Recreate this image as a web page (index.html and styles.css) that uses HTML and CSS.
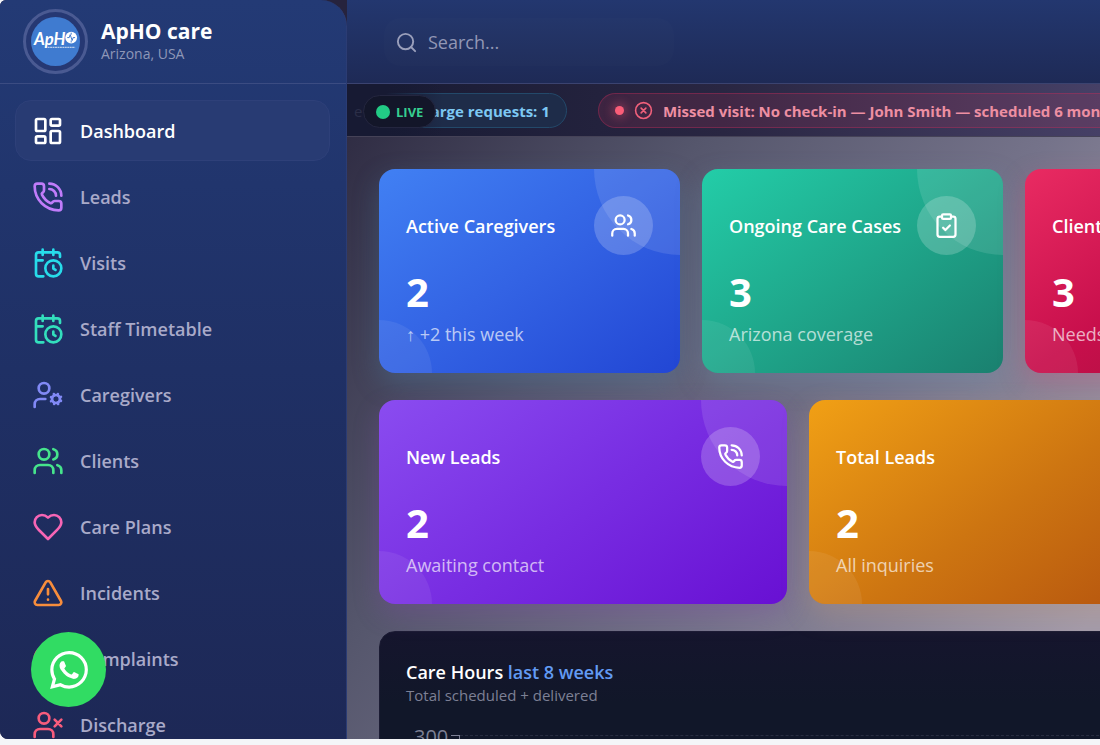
FILE: index.html
```html
<!DOCTYPE html>
<html lang="en">
<head>
    <meta charset="UTF-8">
    <meta name="viewport" content="width=device-width, initial-scale=1.0">
    <title>ApHO care</title>
    <link rel="stylesheet" href="styles.css">
</head>
<body>
    <svg class="sprite" aria-hidden="true">
        <symbol id="dashboard" viewBox="0 0 24 24"><rect x="3" y="3" width="7" height="9" rx="1"/><rect x="14" y="3" width="7" height="5" rx="1"/><rect x="14" y="12" width="7" height="9" rx="1"/><rect x="3" y="16" width="7" height="5" rx="1"/></symbol>
        <symbol id="phone" viewBox="0 0 24 24"><path d="M13 2a9 9 0 0 1 9 9M13 6a5 5 0 0 1 5 5M13.832 16.568a1 1 0 0 0 1.213-.303l.355-.465A2 2 0 0 1 17 15h3a2 2 0 0 1 2 2v3a2 2 0 0 1-2 2A18 18 0 0 1 2 4a2 2 0 0 1 2-2h3a2 2 0 0 1 2 2v3a2 2 0 0 1-.8 1.6l-.468.351a1 1 0 0 0-.292 1.233 14 14 0 0 0 6.392 6.384"/></symbol>
        <symbol id="calendar" viewBox="0 0 24 24"><path d="M16 14v2.2l1.6 1M16 2v4M21 7.5V6a2 2 0 0 0-2-2H5a2 2 0 0 0-2 2v14a2 2 0 0 0 2 2h3.5M3 10h5M8 2v4"/><circle cx="16" cy="16" r="6"/></symbol>
        <symbol id="user-cog" viewBox="0 0 24 24"><circle cx="18" cy="15" r="3"/><circle cx="9" cy="7" r="4"/><path d="M10 15H6a4 4 0 0 0-4 4v2M21.7 16.4l-.9-.3M15.2 13.9l-.9-.3M16.6 18.7l.3-.9M19.1 12.2l.3-.9M19.6 18.7l-.4-1M16.8 12.3l-.4-1M14.3 16.6l1-.4M20.7 13.8l1-.4"/></symbol>
        <symbol id="users" viewBox="0 0 24 24"><path d="M16 21v-2a4 4 0 0 0-4-4H6a4 4 0 0 0-4 4v2M16 3.128a4 4 0 0 1 0 7.744M22 21v-2a4 4 0 0 0-3-3.87"/><circle cx="9" cy="7" r="4"/></symbol>
        <symbol id="heart" viewBox="0 0 24 24"><path d="M19 14c1.49-1.46 3-3.21 3-5.5A5.5 5.5 0 0 0 16.5 3c-1.76 0-3 .5-4.5 2-1.5-1.5-2.74-2-4.5-2A5.5 5.5 0 0 0 2 8.5c0 2.3 1.5 4.05 3 5.5l7 7Z"/></symbol>
        <symbol id="alert" viewBox="0 0 24 24"><path d="m21.73 18-8-14a2 2 0 0 0-3.48 0l-8 14A2 2 0 0 0 4 21h16a2 2 0 0 0 1.73-3M12 9v4M12 17h.01"/></symbol>
        <symbol id="circle-alert" viewBox="0 0 24 24"><circle cx="12" cy="12" r="10"/><path d="M12 8v4M12 16h.01"/></symbol>
        <symbol id="user-x" viewBox="0 0 24 24"><path d="M16 21v-2a4 4 0 0 0-4-4H6a4 4 0 0 0-4 4v2M17 8l5 5M22 8l-5 5"/><circle cx="9" cy="7" r="4"/></symbol>
        <symbol id="search" viewBox="0 0 24 24"><circle cx="11" cy="11" r="8"/><path d="m21 21-4.3-4.3"/></symbol>
        <symbol id="circle-x" viewBox="0 0 24 24"><circle cx="12" cy="12" r="10"/><path d="m15 9-6 6M9 9l6 6"/></symbol>
        <symbol id="clipboard" viewBox="0 0 24 24"><rect x="8" y="2" width="8" height="4" rx="1"/><path d="M16 4h2a2 2 0 0 1 2 2v14a2 2 0 0 1-2 2H6a2 2 0 0 1-2-2V6a2 2 0 0 1 2-2h2M9 14l2 2 4-4"/></symbol>
    </svg>

    <div class="app">
        <aside class="sidebar">
            <div class="brand">
                <div class="brand-ring">
                    <svg class="brand-logo" viewBox="0 0 50 50" role="img" aria-label="ApHO logo">
                        <circle cx="25" cy="25" r="25" fill="#3f7bd0"/>
                        <text x="3" y="29" class="logo-text">ApH</text>
                        <circle cx="41" cy="21" r="6" fill="#fff"/>
                        <path d="M37 21h2l1-3 2 6 1-3h2M41 16v2M41 24v2" fill="none" stroke="#3f7bd0" stroke-width="1"/>
                        <path d="M17 31h28" stroke="#b9cdea" stroke-width="1.5" stroke-dasharray="2 .5"/>
                    </svg>
                </div>
                <div>
                    <div class="brand-name">ApHO care</div>
                    <div class="brand-place">Arizona, USA</div>
                </div>
            </div>
            <nav class="menu">
                <a href="#" class="menu-item active"><svg class="icon"><use href="#dashboard"/></svg>Dashboard</a>
                <a href="#" class="menu-item"><svg class="icon purple"><use href="#phone"/></svg>Leads</a>
                <a href="#" class="menu-item"><svg class="icon cyan"><use href="#calendar"/></svg>Visits</a>
                <a href="#" class="menu-item"><svg class="icon teal"><use href="#calendar"/></svg>Staff Timetable</a>
                <a href="#" class="menu-item"><svg class="icon indigo"><use href="#user-cog"/></svg>Caregivers</a>
                <a href="#" class="menu-item"><svg class="icon green"><use href="#users"/></svg>Clients</a>
                <a href="#" class="menu-item"><svg class="icon pink"><use href="#heart"/></svg>Care Plans</a>
                <a href="#" class="menu-item"><svg class="icon orange"><use href="#alert"/></svg>Incidents</a>
                <a href="#" class="menu-item"><svg class="icon red"><use href="#circle-alert"/></svg>Complaints</a>
                <a href="#" class="menu-item"><svg class="icon rose"><use href="#user-x"/></svg>Discharge</a>
            </nav>
        </aside>

        <div class="content">
            <header class="topbar">
                <label class="search">
                    <svg class="icon"><use href="#search"/></svg>
                    <input type="search" placeholder="Search..." aria-label="Search">
                </label>
            </header>

            <div class="ticker">
                <div class="ticker-track">
                    <div class="alert-pill info"><span class="dot"></span><svg class="icon"><use href="#user-x"/></svg>Discharge requests: 1</div>
                    <div class="alert-pill danger"><span class="dot"></span><svg class="icon"><use href="#circle-x"/></svg>Missed visit: No check-in — John Smith — scheduled 6 months ago</div>
                </div>
                <span class="ticker-fade">e</span>
                <div class="live"><span class="live-dot"></span>LIVE</div>
            </div>

            <main class="main">
                <div class="stats four">
                    <section class="stat blue">
                        <div class="stat-head"><h3>Active Caregivers</h3><span class="stat-icon"><svg class="icon"><use href="#users"/></svg></span></div>
                        <p class="stat-value">2</p>
                        <p class="stat-note">↑ +2 this week</p>
                    </section>
                    <section class="stat emerald">
                        <div class="stat-head"><h3>Ongoing Care Cases</h3><span class="stat-icon"><svg class="icon"><use href="#clipboard"/></svg></span></div>
                        <p class="stat-value">3</p>
                        <p class="stat-note">Arizona coverage</p>
                    </section>
                    <section class="stat crimson">
                        <div class="stat-head"><h3>Client Incidents</h3><span class="stat-icon"><svg class="icon"><use href="#alert"/></svg></span></div>
                        <p class="stat-value">3</p>
                        <p class="stat-note">Needs review</p>
                    </section>
                </div>
                <div class="stats three">
                    <section class="stat violet">
                        <div class="stat-head"><h3>New Leads</h3><span class="stat-icon"><svg class="icon"><use href="#phone"/></svg></span></div>
                        <p class="stat-value">2</p>
                        <p class="stat-note">Awaiting contact</p>
                    </section>
                    <section class="stat amber">
                        <div class="stat-head"><h3>Total Leads</h3><span class="stat-icon"><svg class="icon"><use href="#users"/></svg></span></div>
                        <p class="stat-value">2</p>
                        <p class="stat-note">All inquiries</p>
                    </section>
                </div>
                <section class="chart">
                    <h3>Care Hours <span>last 8 weeks</span></h3>
                    <p>Total scheduled + delivered</p>
                    <div class="axis"><span>300</span><i class="tick"></i><i class="grid-line"></i></div>
                </section>
            </main>
        </div>
    </div>

    <a href="#" class="whatsapp" aria-label="WhatsApp">
        <svg viewBox="0 0 24 24"><path d="M17.472 14.382c-.297-.149-1.758-.867-2.03-.967-.273-.099-.471-.148-.67.15-.197.297-.767.966-.94 1.164-.173.199-.347.223-.644.075-.297-.15-1.255-.463-2.39-1.475-.883-.788-1.48-1.761-1.653-2.059-.173-.297-.018-.458.13-.606.134-.133.298-.347.446-.52.149-.174.198-.298.298-.497.099-.198.05-.371-.025-.52-.075-.149-.669-1.612-.916-2.207-.242-.579-.487-.5-.669-.51-.173-.008-.371-.01-.57-.01-.198 0-.52.074-.792.372-.272.297-1.04 1.016-1.04 2.479 0 1.462 1.065 2.875 1.213 3.074.149.198 2.096 3.2 5.077 4.487.709.306 1.262.489 1.694.625.712.227 1.36.195 1.871.118.571-.085 1.758-.719 2.006-1.413.248-.694.248-1.289.173-1.413-.074-.124-.272-.198-.57-.347m-5.421 7.403h-.004a9.87 9.87 0 01-5.031-1.378l-.361-.214-3.741.982.998-3.648-.235-.374a9.86 9.86 0 01-1.51-5.26c.001-5.45 4.436-9.884 9.888-9.884 2.64 0 5.122 1.03 6.988 2.898a9.825 9.825 0 012.893 6.994c-.003 5.45-4.437 9.884-9.885 9.884m8.413-18.297A11.815 11.815 0 0012.05 0C5.495 0 .16 5.335.157 11.892c0 2.096.547 4.142 1.588 5.945L.057 24l6.305-1.654a11.882 11.882 0 005.683 1.448h.005c6.554 0 11.89-5.335 11.893-11.893a11.821 11.821 0 00-3.48-8.413z"/></svg>
    </a>
</body>
</html>
```

FILE: styles.css
```css
* {
    box-sizing: border-box;
}
body {
    margin: 0;
    height: 100vh;
    padding-bottom: 6px;
    overflow: hidden;
    background: #f4f5f8;
    color: #fff;
    font-family: "Open Sans", "Noto Sans", sans-serif;
    font-size: 18px;
}
h3, p {
    margin: 0;
}
.sprite {
    display: none;
}
.icon {
    flex: none;
    width: 32px;
    height: 32px;
    fill: none;
    stroke: currentColor;
    stroke-width: 2;
    stroke-linecap: round;
    stroke-linejoin: round;
}
.app {
    display: flex;
    height: 100%;
    overflow: hidden;
    border-radius: 6px 0 0 8px;
    background: #26233d;
}

/* sidebar */
.sidebar {
    flex: none;
    width: 347px;
    overflow: hidden;
    border-right: 1px solid #2b3c74;
    border-radius: 0 26px 0 0;
    background: linear-gradient(#233a75, #1f3065 50%, #1d2856);
}
.brand {
    display: flex;
    align-items: center;
    gap: 13px;
    height: 84px;
    padding: 0 24px 0 23px;
    border-bottom: 1px solid #3b4c82;
}
.brand-ring {
    padding: 5px;
    border: 3px solid #4a5a92;
    border-radius: 50%;
    background: #263873;
}
.brand-logo {
    display: block;
    width: 49px;
    height: 49px;
}
.logo-text {
    fill: #fff;
    font-family: Lato, sans-serif;
    font-size: 17px;
    font-style: italic;
    font-weight: bold;
}
.brand-name {
    font-size: 21px;
    font-weight: bold;
    line-height: 24px;
}
.brand-place {
    color: #8e97b8;
    font-size: 14px;
    line-height: 22px;
}
.menu {
    display: flex;
    flex-direction: column;
    gap: 5px;
    padding: 16px 16px 0 15px;
}
.menu-item {
    flex: none;
    display: flex;
    align-items: center;
    gap: 16px;
    height: 61px;
    padding: 0 16px;
    border: 1px solid transparent;
    border-radius: 16px;
    color: #a9aac9;
    font-weight: 600;
    text-decoration: none;
}
.menu-item.active {
    border-color: #2e4079;
    background: #283b73;
    color: #fff;
}
.purple { color: #c07cfa; }
.cyan { color: #27dcea; }
.teal { color: #33dfbd; }
.indigo { color: #8189f5; }
.green { color: #46e48c; }
.pink { color: #f765b5; }
.orange { color: #f78d3c; }
.red { color: #f56a6a; }
.rose { color: #f75c7c; }

/* top bar */
.content {
    flex: 1;
    min-width: 0;
    display: flex;
    flex-direction: column;
}
.topbar {
    flex: none;
    height: 84px;
    padding: 18px 37px;
    border-bottom: 1px solid #3b4370;
    background: linear-gradient(#23376f, #1e2a56);
}
.search {
    display: flex;
    align-items: center;
    gap: 10px;
    width: 290px;
    height: 48px;
    padding: 0 11px;
    border-radius: 16px;
    background: rgba(255, 255, 255, 0.01);
    color: #9a9fbb;
}
.search .icon {
    width: 23px;
    height: 23px;
}
.search input {
    width: 100%;
    padding: 0;
    border: 0;
    outline: 0;
    background: none;
    color: #fff;
    font: inherit;
}
.search input::placeholder {
    color: #9297b5;
    opacity: 1;
}

/* alerts ticker */
.ticker {
    position: relative;
    flex: none;
    height: 53px;
    overflow: hidden;
    border-bottom: 1px solid #454257;
    background: linear-gradient(90deg, #171a33, #292642 50%, #464066);
}
.ticker::before {
    content: "";
    position: absolute;
    z-index: 1;
    top: 0;
    bottom: 0;
    left: 0;
    width: 96px;
    background: linear-gradient(90deg, #171a33 40%, transparent);
}
.ticker-track {
    display: flex;
    gap: 31px;
    width: max-content;
    margin-left: -22px;
    padding-top: 9px;
}
.alert-pill {
    display: flex;
    align-items: center;
    height: 35px;
    padding: 0 16px;
    border: 1px solid;
    border-radius: 18px;
    font-size: 15px;
    font-weight: bold;
    white-space: nowrap;
}
.alert-pill .icon {
    width: 19px;
    height: 19px;
    margin: 0 10px;
}
.alert-pill .dot {
    width: 9px;
    height: 9px;
    border-radius: 50%;
    background: currentColor;
}
.info {
    border-color: #23496a;
    background: #1e2c49;
    color: #7dc8f3;
}
.danger {
    border-color: rgba(190, 45, 90, 0.4);
    background: rgba(200, 50, 90, 0.16);
    color: #ed8fa2;
}
.danger .icon {
    color: #f0607b;
}
.danger .dot {
    background: #fa5d78;
    box-shadow: 0 0 9px 4px rgba(250, 93, 120, 0.25);
}
.ticker-fade {
    position: absolute;
    z-index: 1;
    top: 16px;
    left: 7px;
    color: #2b2e47;
    font-size: 15px;
    line-height: 22px;
}
.live {
    position: absolute;
    z-index: 2;
    top: 11px;
    left: 16px;
    display: flex;
    align-items: center;
    gap: 6px;
    height: 33px;
    padding: 0 12px;
    border: 1px solid #24263f;
    border-radius: 17px;
    background: #131629;
    color: #36cf90;
    font-size: 13px;
    font-weight: bold;
}
.live-dot {
    width: 14px;
    height: 14px;
    border-radius: 50%;
    background: #22cb85;
}

/* dashboard */
.main {
    flex: 1;
    min-height: 0;
    display: flex;
    flex-direction: column;
    gap: 27px;
    padding: 32px 32px 0;
    overflow: hidden;
    background: linear-gradient(125deg, #302d44, #55566c 30%, #75738a 60%, #a39baa 92%);
}
.stats {
    flex: none;
    display: grid;
    gap: 22px;
}
.four {
    grid-template-columns: repeat(4, minmax(301px, 1fr));
}
.three {
    grid-template-columns: repeat(3, minmax(408px, 1fr));
}
.stat {
    position: relative;
    overflow: hidden;
    padding: 27px 27px 26px;
    border-radius: 16px;
}
.stat::before,
.stat::after {
    content: "";
    position: absolute;
    border-radius: 50%;
    background: rgba(255, 255, 255, 0.11);
}
.stat::before {
    top: -86px;
    right: -86px;
    width: 172px;
    height: 172px;
}
.stat::after {
    bottom: -53px;
    left: -53px;
    width: 106px;
    height: 106px;
    background: rgba(255, 255, 255, 0.07);
}
.blue {
    background: linear-gradient(145deg, #4180f3, #3363e4 50%, #2246d4);
    box-shadow: 0 10px 26px rgba(70, 120, 160, 0.35);
}
.emerald {
    background: linear-gradient(145deg, #23cda8, #1fa78b 50%, #1a806f);
    box-shadow: 0 10px 26px rgba(100, 140, 170, 0.35);
}
.crimson {
    background: linear-gradient(145deg, #e92b62, #c80f4c 50%, #9f1239);
    box-shadow: 0 10px 26px rgba(200, 80, 120, 0.35);
}
.violet {
    background: linear-gradient(145deg, #8a4cf0, #782de2 50%, #6810d3);
    box-shadow: 0 10px 26px rgba(130, 70, 170, 0.3);
}
.amber {
    background: linear-gradient(145deg, #f1a015, #cd7511 50%, #b04d0e);
    box-shadow: 0 10px 26px rgba(190, 150, 120, 0.35);
}
.stat-head {
    display: flex;
    align-items: center;
    justify-content: space-between;
}
.stat h3 {
    font-size: 18px;
    font-weight: 600;
}
.stat-icon {
    position: relative;
    z-index: 1;
    display: flex;
    align-items: center;
    justify-content: center;
    width: 59px;
    height: 59px;
    border-radius: 50%;
    background: rgba(255, 255, 255, 0.2);
}
.stat-icon .icon {
    width: 27px;
    height: 27px;
}
.stat-value {
    margin-top: 13px;
    font-size: 40px;
    font-weight: bold;
    line-height: 48px;
}
.stat-note {
    margin-top: 5px;
    color: rgba(255, 255, 255, 0.68);
    line-height: 26px;
}
.chart {
    flex: none;
    min-width: 1268px;
    padding: 27px 26px;
    border: 1px solid #1b1b33;
    border-radius: 16px;
    background: linear-gradient(#15152d, #111729 50%);
}
.chart h3 {
    font-size: 18px;
    font-weight: 600;
    line-height: 26px;
}
.chart h3 span {
    color: #629bf3;
}
.chart p {
    color: #7d8095;
    font-size: 15px;
    line-height: 20px;
}
.axis {
    display: flex;
    align-items: flex-start;
    margin-top: 21px;
    padding-left: 8px;
    color: #7d8095;
    font-size: 20px;
    line-height: 22px;
}
.tick {
    width: 9px;
    height: 5px;
    margin: 9px 0 0 3px;
    border-top: 1px solid #7d8095;
    border-right: 1px solid #7d8095;
}
.grid-line {
    flex: 1;
    margin-top: 9px;
    border-top: 1px dashed #282d40;
}

.whatsapp {
    position: fixed;
    bottom: 38px;
    left: 31px;
    display: flex;
    align-items: center;
    justify-content: center;
    width: 75px;
    height: 75px;
    border-radius: 50%;
    background: #31dc63;
}
.whatsapp svg {
    width: 38px;
    height: 38px;
    fill: #fff;
}
```
